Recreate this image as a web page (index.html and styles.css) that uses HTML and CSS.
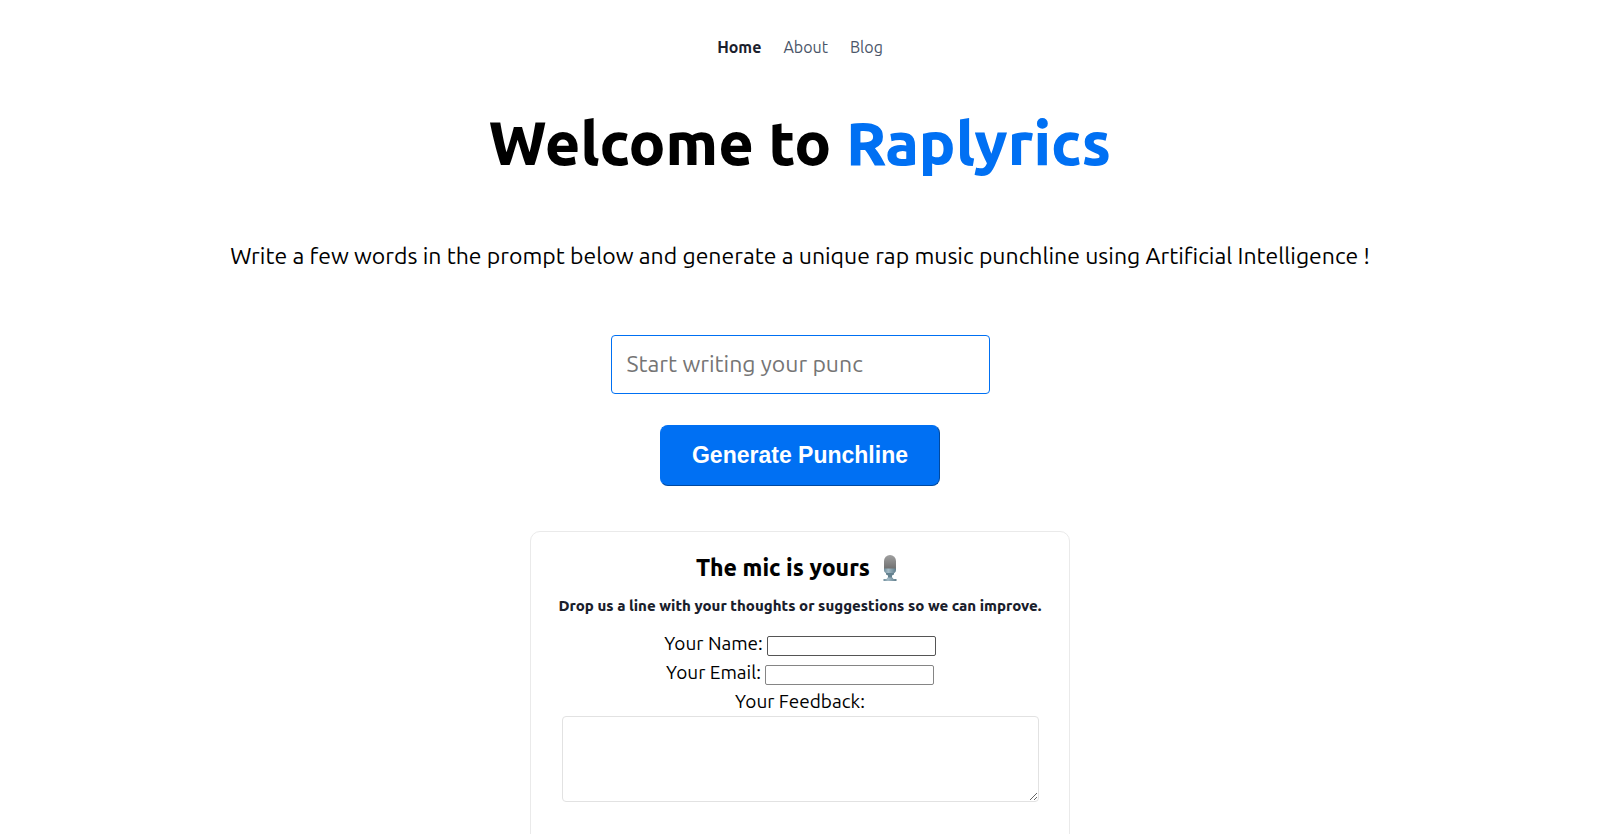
FILE: index.html
```html
<!DOCTYPE html>
<html lang="en">
<head>
<meta charset="utf-8">
<title>Raplyrics</title>
<link rel="stylesheet" href="styles.css">
</head>
<body>
<nav class="nav">
  <a class="nav-link nav-link-active" href="#home">Home</a>
  <a class="nav-link" href="#about">About</a>
  <a class="nav-link" href="#blog">Blog</a>
</nav>
<main class="main">
  <h1 class="title">Welcome to <a class="brand" href="#home">Raplyrics</a></h1>
  <p class="description">Write a few words in the prompt below and generate a unique rap music punchline using Artificial Intelligence !</p>
  <form class="prompt">
    <input class="prompt-input" type="text" aria-label="Punchline prompt" placeholder="Start writing your punc">
    <button class="generate" type="button">Generate Punchline</button>
  </form>
  <section class="card">
    <h2 class="card-title">The mic is yours
      <svg class="mic" viewBox="-6 0 28 26" aria-hidden="true">
        <defs>
          <linearGradient id="head" x1="0" y1="0" x2="0" y2="1"><stop offset="0" stop-color="#a0a0a0"/><stop offset="1" stop-color="#707070"/></linearGradient>
          <linearGradient id="cup" x1="0" y1="0" x2="1" y2="0"><stop offset="0" stop-color="#6f8d9b"/><stop offset=".35" stop-color="#a3bac5"/><stop offset="1" stop-color="#607d8b"/></linearGradient>
        </defs>
        <path d="M2 6a6 6 0 0 1 12 0v8H2z" fill="url(#head)"/>
        <path d="M2 13.500h12v1.500c0 2-1.500 3.500-4 4H6c-2.500-.5-4-2-4-4z" fill="url(#cup)"/>
        <path d="M4 18h8v1.500L10 20.500v2.500H6v-2.500l-2-1z" fill="#64818f"/>
        <path d="M5.500 22.500h5l1 1.500h3v2h-13v-2h3z" fill="url(#cup)"/>
      </svg>
    </h2>
    <p class="card-text">Drop us a line with your thoughts or suggestions so we can improve.</p>
    <form class="feedback">
      <div class="field"><label for="name">Your Name:</label><input class="field-input field-input-name" id="name" type="text"></div>
      <div class="field"><label for="email">Your Email:</label><input class="field-input" id="email" type="email"></div>
      <div class="field"><label for="message">Your Feedback:</label></div>
      <textarea class="message" id="message"></textarea>
    </form>
  </section>
</main>
</body>
</html>
```
FILE: styles.css
```css
* {
  box-sizing: border-box;
}

html {
  scrollbar-width: none;
}

body {
  margin: 0;
  background: #fff;
  color: #000;
  font-family: Ubuntu, "Noto Sans", sans-serif;
  font-size: 19px;
  font-weight: 400;
}

.nav {
  display: flex;
  justify-content: center;
  gap: 22px;
  padding-top: 35px;
  font-size: 16px;
  line-height: 24px;
}

.nav-link {
  color: #4a5568;
  text-decoration: none;
}

.nav-link-active {
  color: #1a202c;
  font-weight: 700;
}

.main {
  display: flex;
  flex-direction: column;
  align-items: center;
  padding: 47px 16px 0;
}

.title {
  margin: 0;
  font-size: 61px;
  line-height: 74px;
  font-weight: 800;
  text-align: center;
}

.brand {
  color: #0070f3;
  text-decoration: none;
}

.description {
  margin: 58px 0 61px;
  font-size: 23px;
  line-height: 36px;
  text-align: center;
}

.prompt {
  display: flex;
  flex-direction: column;
  align-items: center;
  gap: 31px;
}

.prompt-input {
  width: 379px;
  max-width: 100%;
  padding: 11px 15px 12px;
  border: 1px solid #0070f3;
  border-radius: 4px;
  font-family: inherit;
  font-size: 23px;
  line-height: 34px;
}

.prompt-input::placeholder {
  color: #757575;
}

.generate {
  padding: 15px 31px;
  border: 1px outset #0070f3;
  border-radius: 8px;
  background: #0070f3;
  color: #fff;
  font-family: "Liberation Sans", Arial, sans-serif;
  font-size: 23px;
  line-height: 29px;
  font-weight: 700;
}

.card {
  width: 540px;
  max-width: 100%;
  margin: 45px 0 0;
  padding: 18px 16px 120px;
  border: 1px solid #eaeaea;
  border-radius: 10px;
  text-align: center;
}

.card-title {
  display: flex;
  justify-content: center;
  align-items: center;
  gap: 6px;
  margin: 0 0 8px;
  font-size: 23px;
  line-height: 36px;
  font-weight: 800;
}

.mic {
  width: 28px;
  height: 26px;
}

.card-text {
  margin: 0 0 11px;
  color: #1a202c;
  font-size: 15px;
  line-height: 24px;
  font-weight: 800;
}

.feedback {
  display: flex;
  flex-direction: column;
  align-items: center;
}

.field {
  display: flex;
  align-items: center;
  gap: 4px;
  line-height: 29px;
}

.field-input {
  width: 169px;
  height: 20px;
  margin-top: 5px;
  padding: 1px 2px;
  border: 1px solid #858585;
  border-radius: 2px;
}

.field-input-name {
  border-color: #555;
}

.message {
  width: 477px;
  max-width: 100%;
  height: 86px;
  border: 1px solid #e2e2e2;
  border-radius: 4px;
}
```
